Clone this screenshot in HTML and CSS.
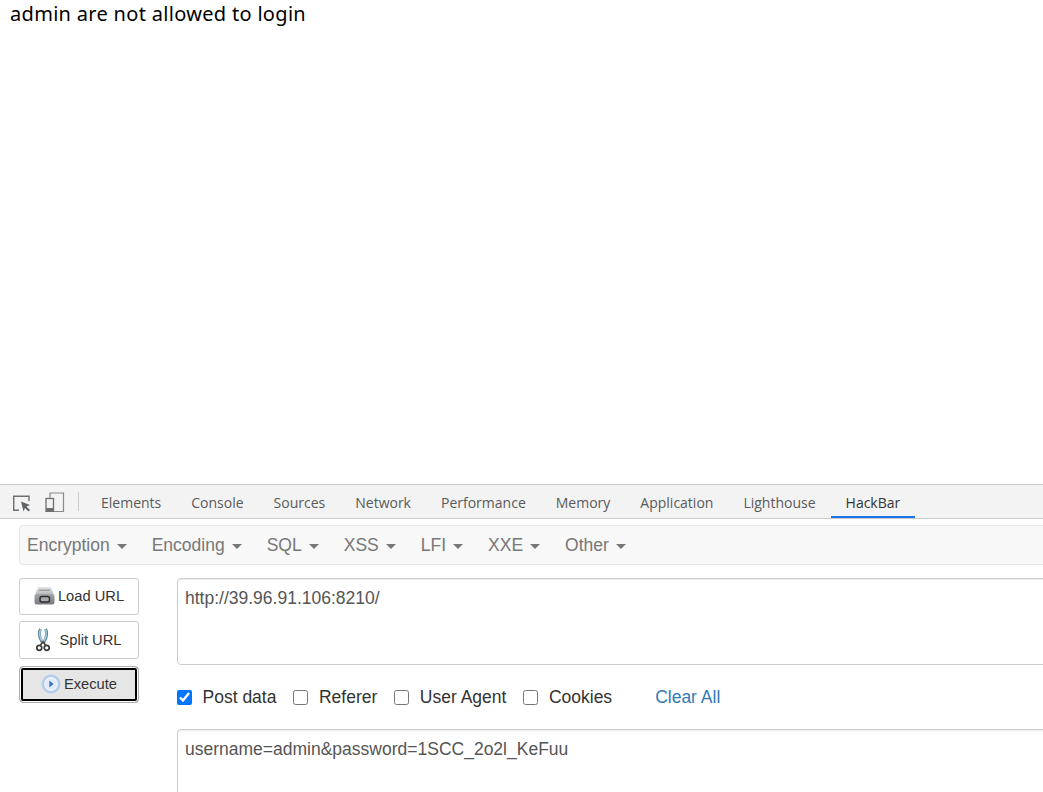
FILE: index.html
```html
<!DOCTYPE html>
<html lang="en">
<head>
<meta charset="utf-8">
<title>login</title>
<link rel="stylesheet" href="styles.css">
</head>
<body>
<main class="page"><p class="message">admin are not allowed to login</p></main>
<section class="devtools">
  <nav class="tabbar">
    <svg class="tool-icon" width="20" height="20" viewBox="0 0 20 20"><path d="M8 18.200H2.700V4.200H18V9" fill="none" stroke="#6e6e6e" stroke-width="1.400"/><path d="M10 9.500l9 3.500-3.500 1.500 3.500 3.500-1.500 1.500-3.500-3.500-1.500 3.500z" fill="#5f6368"/></svg>
    <svg class="tool-icon" width="21" height="20" viewBox="0 0 21 20"><path d="M6 6V1h13.500v18.500H10" fill="none" stroke="#8a8a8a" stroke-width="1.200"/><rect x="2" y="6.500" width="7.500" height="13" fill="none" stroke="#6e6e6e" stroke-width="1.300"/><rect x="2" y="16" width="7.500" height="3.500" fill="#6e6e6e"/></svg>
    <span class="divider"></span>
    <span class="tab">Elements</span><span class="tab">Console</span><span class="tab">Sources</span><span class="tab">Network</span><span class="tab">Performance</span><span class="tab">Memory</span><span class="tab">Application</span><span class="tab">Lighthouse</span><span class="tab active">HackBar</span>
  </nav>
  <div class="hackbar">
    <div class="menu">
      <span class="menu-item">Encryption<i class="caret"></i></span>
      <span class="menu-item">Encoding<i class="caret"></i></span>
      <span class="menu-item">SQL<i class="caret"></i></span>
      <span class="menu-item">XSS<i class="caret"></i></span>
      <span class="menu-item">LFI<i class="caret"></i></span>
      <span class="menu-item">XXE<i class="caret"></i></span>
      <span class="menu-item">Other<i class="caret"></i></span>
    </div>
    <div class="workspace">
      <div class="actions">
        <button class="btn btn-load" type="button"><svg width="21" height="19" viewBox="0 0 21 19"><defs><linearGradient id="printer-top" x1="0" y1="0" x2="0" y2="1"><stop offset="0" stop-color="#e4e5e6"/><stop offset="1" stop-color="#b4b6b8"/></linearGradient><linearGradient id="printer-body" x1="0" y1="0" x2="0" y2="1"><stop offset="0" stop-color="#a5a7a9"/><stop offset="1" stop-color="#77797c"/></linearGradient></defs><path d="M4 1h13l3 8H1z" fill="url(#printer-top)"/><path d="M5 3.500h11v1.500H5z" fill="#9d9fa1"/><rect x="0.500" y="8" width="20" height="10.500" rx="2.500" fill="url(#printer-body)"/><rect x="6" y="10.500" width="9.500" height="5.500" rx="2" fill="#a9abad" stroke="#2c2e30" stroke-width="1.500"/></svg>Load URL</button>
        <button class="btn btn-split" type="button"><svg width="14" height="24" viewBox="0 0 14 24"><path d="M4.500 1C2.500 5 3.500 10 6.300 14.500" fill="none" stroke="#5f8296" stroke-width="3"/><path d="M9.500 1C11.500 5 10.500 10 7.700 14.500" fill="none" stroke="#5f8296" stroke-width="3"/><path d="M4.500 1.500C3 5 4 10 6.400 13.500" fill="none" stroke="#a9d3e6" stroke-width="1.300"/><path d="M9.500 1.500C11 5 10 10 7.600 13.500" fill="none" stroke="#a9d3e6" stroke-width="1.300"/><circle cx="3.300" cy="19.800" r="2.500" fill="none" stroke="#3a3a3a" stroke-width="1.700"/><circle cx="10.700" cy="19.800" r="2.500" fill="none" stroke="#3a3a3a" stroke-width="1.700"/><path d="M4.300 17.300l2.700-3.300 2.700 3.300" fill="none" stroke="#3a3a3a" stroke-width="1.500"/></svg>Split URL</button>
        <button class="btn btn-execute" type="button"><svg width="20" height="20" viewBox="0 0 20 20"><circle cx="10" cy="10" r="8.200" fill="#eef4fb" stroke="#b3cdea" stroke-width="2.600"/><circle cx="10" cy="10" r="5.500" fill="#dfeaf6"/><path d="M8.300 6.500l4.200 3.500-4.200 3.500z" fill="#3a76b8"/></svg>Execute</button>
      </div>
      <div class="fields">
        <div class="textbox textbox-url">http://39.96.91.106:8210/</div>
        <div class="options">
          <label class="option"><input class="check" type="checkbox" checked>Post data</label>
          <label class="option"><input class="check" type="checkbox">Referer</label>
          <label class="option"><input class="check" type="checkbox">User Agent</label>
          <label class="option"><input class="check" type="checkbox">Cookies</label>
          <a class="clear" href="#">Clear All</a>
        </div>
        <div class="textbox textbox-post">username=admin&amp;password=1SCC_2o2l_KeFuu</div>
      </div>
    </div>
  </div>
</section>
</body>
</html>
```
FILE: styles.css
```css
* { box-sizing: border-box; }
html, body { margin: 0; height: 100%; overflow: hidden; background: #fff; }
body { display: flex; flex-direction: column; width: 1043px; height: 792px; font-family: "Liberation Sans", Arial, sans-serif; }
.page { height: 484px; flex: none; }
.message { margin: 0; padding: 0 0 0 10px; font: 20px/28px "Noto Sans", sans-serif; letter-spacing: .31px; color: #000; }
.devtools { flex: 1; overflow: hidden; border-top: 1px solid #ccc; }
.tabbar { display: flex; align-items: center; height: 34px; background: #f3f3f3; border-bottom: 1px solid #ccc; padding-left: 11px; font: 14px "Open Sans", sans-serif; color: #5a5a5a; }
.tool-icon { flex: none; margin-right: 13px; }
.divider { width: 1px; height: 19px; background: #ccc; margin: 0 7px 0 0; }
.tab { height: 33px; line-height: 35px; padding: 0 15px; white-space: nowrap; }
.tab.active { color: #333; border-bottom: 2px solid #1a73e8; }
.hackbar { padding: 6px 0 0 19px; }
.menu { display: flex; align-items: center; gap: 25px; height: 40px; margin-right: -4px; padding-left: 7px; background: #f8f8f8; border: 1px solid #e7e7e7; border-radius: 4px; font-size: 17.500px; color: #777; }
.menu-item { display: flex; align-items: center; white-space: nowrap; }
.caret { width: 0; height: 0; margin-left: 7px; margin-top: 2px; border-top: 5px solid #777; border-left: 5px solid transparent; border-right: 5px solid transparent; }
.workspace { display: flex; margin-top: 13px; }
.actions { flex: none; width: 158px; display: flex; flex-direction: column; gap: 6px; }
.btn { display: flex; align-items: center; justify-content: center; width: 120px; height: 37px; padding: 0; background: #fff; border: 1px solid #ccc; border-radius: 3px; font: 14.700px "Liberation Sans", sans-serif; color: #333; gap: 3px; }
.btn-load { padding-bottom: 2px; }
.btn-split { gap: 9px; height: 38px; }
.btn-execute { margin-top: 1px; padding-bottom: 2px; background: #e6e6e6; border-color: #adadad; border-radius: 4px; box-shadow: inset 0 0 0 1px #fff, inset 0 0 0 3px #000; }
.fields { flex: 1; min-width: 0; margin-right: -8px; }
.textbox { padding: 9px 7px; border: 1px solid #ccc; border-radius: 4px; font-size: 17.500px; line-height: 20px; color: #555; box-shadow: inset 0 1px 1px rgba(0,0,0,.075); }
.textbox-url { height: 87px; }
.options { display: flex; align-items: center; height: 64px; font-size: 17.500px; color: #333; }
.option { display: flex; align-items: center; margin-right: 17px; }
.check { width: 15px; height: 15px; margin: 0 10.500px 0 0; accent-color: #0075ff; }
.clear { margin-left: 26px; color: #337ab7; text-decoration: none; }
.textbox-post { height: 100px; }
```
